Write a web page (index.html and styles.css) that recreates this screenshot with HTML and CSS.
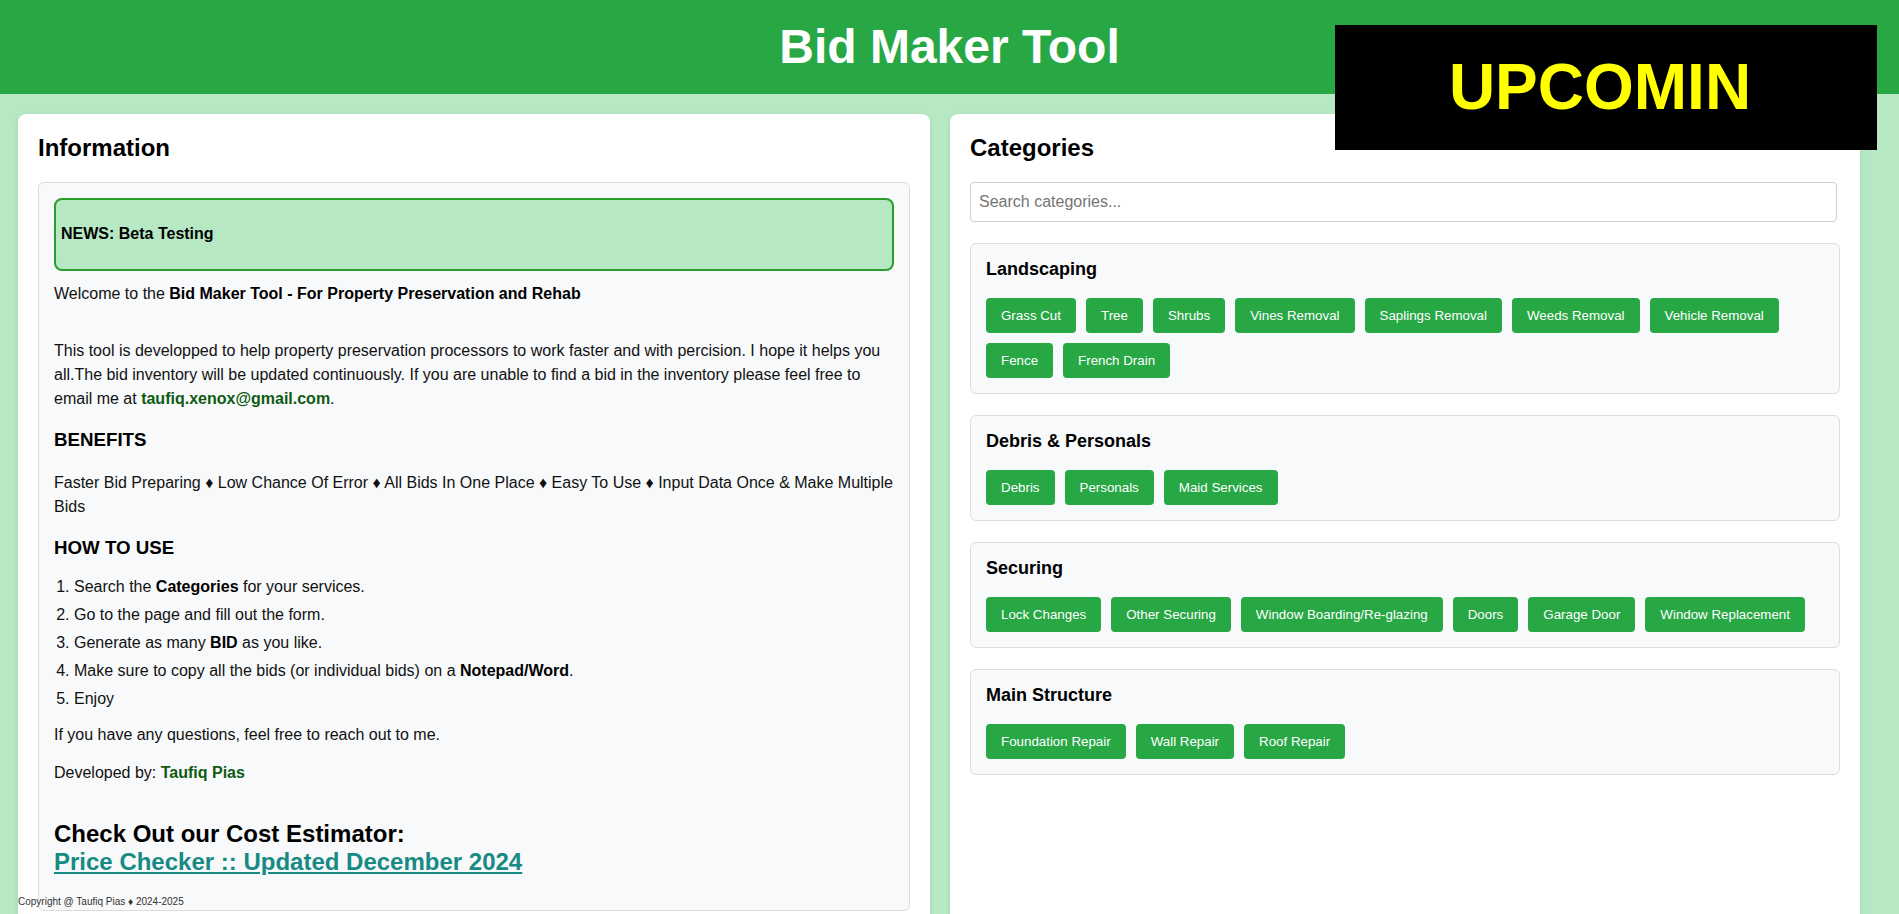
FILE: index.html
```html
<!DOCTYPE html>
<html lang="en">
<head>
<meta charset="utf-8">
<title>Bid Maker Tool</title>
<link rel="stylesheet" href="styles.css">
</head>
<body>
<div class="page">
  <header class="topbar">
    <h1 class="topbar-title">Bid Maker Tool</h1>
  </header>

  <main class="layout">
    <section class="panel">
      <h2 class="panel-title">Information</h2>
      <div class="info-box">
        <div class="news">NEWS: Beta Testing</div>
        <p class="welcome">Welcome to the <strong>Bid Maker Tool - For Property Preservation and Rehab</strong></p>
        <p class="intro">This tool is developped to help property preservation processors to work faster and with percision. I hope it helps you all.The bid inventory will be updated continuously. If you are unable to find a bid in the inventory please feel free to email me at <strong class="accent">taufiq.xenox@gmail.com</strong>.</p>
        <h3 class="info-heading benefits-heading">BENEFITS</h3>
        <p class="benefits">Faster Bid Preparing ♦ Low Chance Of Error ♦ All Bids In One Place ♦ Easy To Use ♦ Input Data Once &amp; Make Multiple Bids</p>
        <h3 class="info-heading howto-heading">HOW TO USE</h3>
        <ol class="steps">
          <li>Search the <strong>Categories</strong> for your services.</li>
          <li>Go to the page and fill out the form.</li>
          <li>Generate as many <strong>BID</strong> as you like.</li>
          <li>Make sure to copy all the bids (or individual bids) on a <strong>Notepad/Word</strong>.</li>
          <li>Enjoy</li>
        </ol>
        <p class="questions">If you have any questions, feel free to reach out to me.</p>
        <p class="developer">Developed by: <strong class="accent">Taufiq Pias</strong></p>
        <div class="estimator">
          <div class="estimator-title">Check Out our Cost Estimator:</div>
          <a class="estimator-link" href="#">Price Checker :: Updated December 2024</a>
        </div>
      </div>
    </section>

    <section class="panel">
      <h2 class="panel-title">Categories</h2>
      <input class="search" type="text" placeholder="Search categories...">

      <div class="category">
        <h3 class="category-title">Landscaping</h3>
        <div class="btn-row">
          <button class="btn">Grass Cut</button>
          <button class="btn">Tree</button>
          <button class="btn">Shrubs</button>
          <button class="btn">Vines Removal</button>
          <button class="btn">Saplings Removal</button>
          <button class="btn">Weeds Removal</button>
          <button class="btn">Vehicle Removal</button>
          <button class="btn">Fence</button>
          <button class="btn">French Drain</button>
        </div>
      </div>

      <div class="category">
        <h3 class="category-title">Debris &amp; Personals</h3>
        <div class="btn-row">
          <button class="btn">Debris</button>
          <button class="btn">Personals</button>
          <button class="btn">Maid Services</button>
        </div>
      </div>

      <div class="category">
        <h3 class="category-title">Securing</h3>
        <div class="btn-row">
          <button class="btn">Lock Changes</button>
          <button class="btn">Other Securing</button>
          <button class="btn">Window Boarding/Re-glazing</button>
          <button class="btn">Doors</button>
          <button class="btn">Garage Door</button>
          <button class="btn">Window Replacement</button>
        </div>
      </div>

      <div class="category">
        <h3 class="category-title">Main Structure</h3>
        <div class="btn-row">
          <button class="btn">Foundation Repair</button>
          <button class="btn">Wall Repair</button>
          <button class="btn">Roof Repair</button>
        </div>
      </div>
    </section>
  </main>

  <div class="upcoming">UPCOMIN</div>
  <div class="copyright">Copyright @ Taufiq Pias ♦ 2024-2025</div>
</div>
</body>
</html>
```

FILE: styles.css
```css
* {
  box-sizing: border-box;
}

html, body {
  margin: 0;
  padding: 0;
}

body {
  font-family: "Liberation Sans", Arial, sans-serif;
  font-size: 16px;
  line-height: 24px;
  color: #111;
  background: #b6e8c4;
}

.page {
  position: relative;
  height: 100vh;
  overflow: hidden;
}

/* Header */
.topbar {
  background: #28a745;
  height: 94px;
  padding: 20px 0;
}

.topbar-title {
  margin: 0;
  text-align: center;
  color: #fff;
  font-size: 48px;
  line-height: 54px;
  font-weight: bold;
}

/* Layout */
.layout {
  display: grid;
  grid-template-columns: 912px 910px;
  column-gap: 20px;
  padding: 20px 0 0 18px;
}

.panel {
  background: #fff;
  border-radius: 8px;
  padding: 20px;
  box-shadow: 0 2px 6px rgba(0, 0, 0, 0.08);
  min-height: 900px;
}

.panel-title {
  margin: 0 0 20px;
  font-size: 24px;
  line-height: 28px;
  font-weight: bold;
  color: #000;
}

/* Information box */
.info-box {
  background: #f8f9fa;
  border: 1px solid #dcdcdc;
  border-radius: 6px;
  padding: 15px;
}

.news {
  margin: 0 0 11px;
  padding: 22px 5px 23px;
  background: #b6e8c4;
  border: 2px solid #2a9d2a;
  border-radius: 8px;
  font-size: 16px;
  font-weight: bold;
  color: #000;
}

.welcome {
  margin: 0;
}

.welcome strong {
  color: #000;
}

.intro {
  margin: 33px 0 0;
}

.accent {
  color: #0f5a12;
}

.info-heading {
  margin: 0;
  font-size: 18.72px;
  line-height: 22px;
  font-weight: bold;
  color: #000;
}

.benefits-heading {
  margin-top: 18px;
}

.benefits {
  margin: 20px 0 0;
}

.howto-heading {
  margin-top: 18px;
}

.steps {
  margin: 16px 0 0;
  padding-left: 20px;
}

.steps li {
  margin-bottom: 4px;
}

.steps li:last-child {
  margin-bottom: 0;
}

.steps strong {
  color: #000;
}

.questions {
  margin: 12px 0 0;
}

.developer {
  margin: 14px 0 0;
}

.estimator {
  margin: 35px 0 19px;
  font-size: 24px;
  line-height: 28px;
  font-weight: bold;
}

.estimator-title {
  color: #000;
}

.estimator-link {
  color: #178a84;
  text-decoration: underline;
}

/* Categories */
.search {
  display: block;
  width: calc(100% - 3px);
  height: 40px;
  margin: 0 0 21px;
  padding: 0 8px;
  border: 1px solid #cfcfcf;
  border-radius: 4px;
  font-family: "Liberation Sans", Arial, sans-serif;
  font-size: 16px;
  color: #333;
  background: #fff;
}

.search::placeholder {
  color: #757575;
}

.category {
  background: #f8f9fa;
  border: 1px solid #dedede;
  border-radius: 6px;
  padding: 15px;
  margin-bottom: 21px;
}

.category-title {
  margin: 0 0 18px;
  font-size: 18px;
  line-height: 21px;
  font-weight: bold;
  color: #000;
}

.btn-row {
  display: flex;
  flex-wrap: wrap;
  gap: 10px;
}

.btn {
  background: #28a745;
  color: #fff;
  border: none;
  border-radius: 4px;
  padding: 10px 15px;
  font-family: "Liberation Sans", Arial, sans-serif;
  font-size: 13.333px;
  line-height: 15px;
  cursor: pointer;
}

/* Overlays */
.upcoming {
  position: absolute;
  top: 25px;
  left: 1335px;
  width: 542px;
  height: 125px;
  padding-right: 12px;
  background: #000;
  color: #ffff00;
  font-size: 64px;
  font-weight: bold;
  line-height: 124px;
  text-align: center;
  overflow: hidden;
  white-space: nowrap;
}

.copyright {
  position: absolute;
  top: 896px;
  left: 18px;
  font-size: 10px;
  line-height: 12px;
  color: #333;
}
```
